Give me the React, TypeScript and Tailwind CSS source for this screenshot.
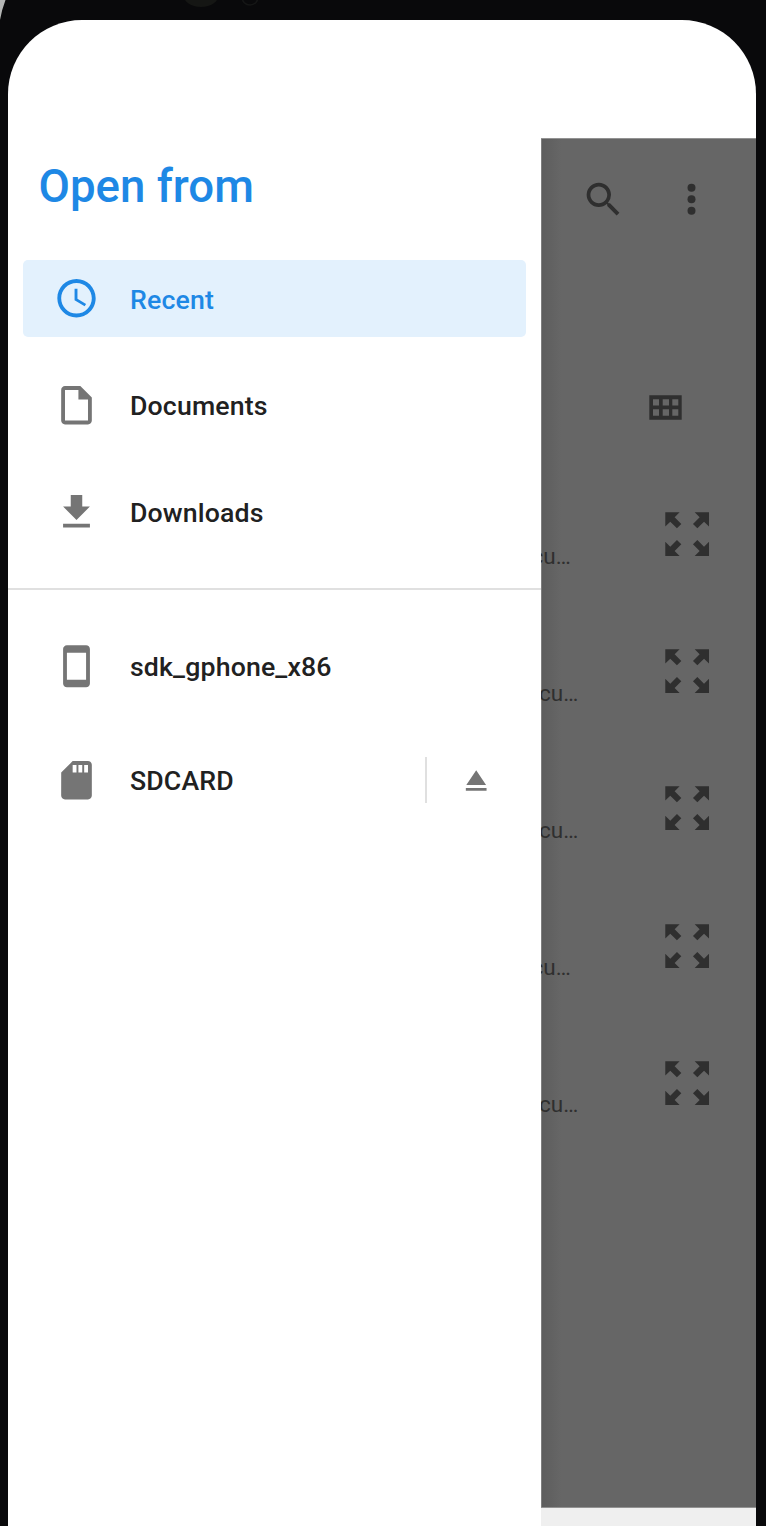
import type { ReactNode } from "react";

const PATHS = {
  recent:
    "M11.99 2C6.47 2 2 6.48 2 12s4.47 10 9.99 10C17.52 22 22 17.52 22 12S17.52 2 11.99 2zM12 20c-4.42 0-8-3.58-8-8s3.58-8 8-8 8 3.58 8 8-3.58 8-8 8zm.5-13H11v6l5.25 3.15.75-1.23-4.5-2.67z",
  document:
    "M14 2H6c-1.1 0-1.99.9-1.99 2L4 20c0 1.1.89 2 1.99 2H18c1.1 0 2-.9 2-2V8l-6-6zM6 20V4h7v5h5v11H6z",
  download: "M19 9h-4V3H9v6H5l7 7 7-7zM5 18v2h14v-2H5z",
  phone:
    "M17 1.01L7 1c-1.1 0-1.99.9-1.99 2v18c0 1.1.89 2 1.99 2h10c1.1 0 2-.9 2-2V3c0-1.1-.9-1.99-2-1.99zM17 19H7V5h10v14z",
  sdcard:
    "M18 2h-8L4.02 8 4 20c0 1.1.9 2 2 2h12c1.1 0 2-.9 2-2V4c0-1.1-.9-2-2-2zm-6 6h-2V4h2v4zm3 0h-2V4h2v4zm3 0h-2V4h2v4z",
  eject: "M5 17h14v2H5zm7-12L5.33 15h13.34z",
  search:
    "M15.5 14h-.79l-.28-.27A6.471 6.471 0 0 0 16 9.5 6.5 6.5 0 1 0 9.5 16c1.61 0 3.09-.59 4.23-1.57l.27.28v.79l5 4.99L20.49 19l-4.99-5zm-6 0C7.01 14 5 11.99 5 9.5S7.01 5 9.5 5 14 7.01 14 9.5 11.99 14 9.5 14z",
  expand:
    "M3 3H8.9L6.85 5.05 9.6 7.8 7.8 9.6 5.05 6.85 3 8.9zM21 3V8.9L18.95 6.85 16.2 9.6 14.4 7.8 17.15 5.05 15.1 3zM3 21V15.1L5.05 17.15 7.8 14.4 9.6 16.2 6.85 18.95 8.9 21zM21 21H15.1L17.15 18.95 14.4 16.2 16.2 14.4 18.95 17.15 21 15.1z",
};

function Icon({
  name,
  className,
  viewBox = "0 0 24 24",
}: {
  name: keyof typeof PATHS;
  className: string;
  viewBox?: string;
}) {
  return (
    <svg viewBox={viewBox} fill="currentColor" className={`shrink-0 ${className}`}>
      <path d={PATHS[name]} />
    </svg>
  );
}

function DrawerItem({
  icon,
  label,
  active = false,
  children,
}: {
  icon: keyof typeof PATHS;
  label: string;
  active?: boolean;
  children?: ReactNode;
}) {
  return (
    <div
      className={`mx-[15px] flex h-[76.4px] items-center rounded-[5px] pl-[30.2px] ${
        active ? "bg-[#e3f1fd] text-[#1e88e5]" : "text-[#757575]"
      }`}
    >
      <Icon name={icon} viewBox="-0.26 -0.15 24 24" className="size-[46px]" />
      <span
        className={`ml-[30.8px] pt-[2.4px] text-[26.7px] leading-8 font-medium tracking-[0.15px] ${
          active ? "text-[#1e88e5]" : "text-[#212121]"
        }`}
      >
        {label}
      </span>
      {children}
    </div>
  );
}

const files = ["u…", "cu…", "cu…", "u…", "cu…"];

function FileRow({ tail }: { tail: string }) {
  return (
    <div className="flex h-[137.1px] items-start justify-between pr-[40px]">
      <div
        className={`mt-[50px] flex h-[30px] justify-end overflow-hidden text-[22.5px] leading-[30px] whitespace-nowrap ${
          tail === "u…" ? "w-[29.7px]" : "w-[37.3px]"
        }`}
      >
        <span>cu…</span>
      </div>
      <Icon name="expand" className="mt-[14.3px] size-[58.3px]" />
    </div>
  );
}

export default function App() {
  return (
    <div
      className="relative flex h-[1526px] w-[766px] flex-col overflow-hidden bg-[#09090b] pt-5 pr-[10px] pl-2"
      style={{ fontFamily: 'Roboto, "Liberation Sans", sans-serif' }}
    >
      <svg className="absolute top-0 left-0 h-6 w-[300px]" viewBox="0 0 300 24">
        <path d="M0 0H5.5Q2 9 0 20Z" fill="#b4b6b5" />
        <ellipse cx="201" cy="-6" rx="18" ry="13" fill="#151614" />
        <circle cx="250" cy="-3" r="8" fill="none" stroke="#151616" strokeWidth="1.5" />
      </svg>
      <div className="flex min-h-0 flex-1 flex-col overflow-hidden rounded-t-[74px] bg-white">
        <div className="h-[118px] shrink-0" />
        <div className="flex min-h-0 flex-1">
          <nav className="flex w-[533px] shrink-0 flex-col bg-white">
            <h1 className="mt-[19px] ml-[30.5px] h-[60px] text-[45.6px] leading-[60px] font-medium text-[#1e88e5]">
              Open from
            </h1>
            <div className="mt-[43.3px] flex flex-col gap-[30.2px]">
              <DrawerItem icon="recent" label="Recent" active />
              <DrawerItem icon="document" label="Documents" />
              <DrawerItem icon="download" label="Downloads" />
            </div>
            <div className="mt-[38.1px] h-[2px] w-full bg-[#e0e0e0]" />
            <div className="mt-[37.8px] flex flex-col gap-[37.8px]">
              <DrawerItem icon="phone" label="sdk_gphone_x86" />
              <DrawerItem icon="sdcard" label="SDCARD">
                <div className="mr-[32.2px] ml-auto flex h-[46px] items-center border-l-2 border-[#e0e0e0] pl-[31.5px]">
                  <Icon name="eject" viewBox="-0.3 -0.5 24 24" className="size-[35.5px]" />
                </div>
              </DrawerItem>
            </div>
          </nav>
          <main className="flex flex-1 flex-col">
            <div className="flex h-[1370px] shrink-0 flex-col border-y border-[#929292] bg-[linear-gradient(to_right,#7e7e7e_1px,#5d5d5d_1px,#666666_20px)] text-[#2f2f2f]">
              <div className="mt-[37px] flex h-[46px] items-center pl-[40px]">
                <Icon name="search" className="size-[45px]" />
                <svg viewBox="0 0 10 32" className="ml-[60.4px] h-8 w-[10px]" fill="currentColor">
                  <circle cx="5.5" cy="4.7" r="4" />
                  <circle cx="5.5" cy="16.2" r="4" />
                  <circle cx="5.5" cy="27.7" r="4" />
                </svg>
              </div>
              <svg
                viewBox="0 0 33 25"
                className="mt-[173px] ml-[108px] h-[25px] w-[33px] shrink-0"
                fill="currentColor"
                fillRule="evenodd"
              >
                <path d="M.3.2h32.4v24.6H.3zM4 4.2v6.3h6V4.2zM13.7 4.2v6.3H20V4.2zM23.3 4.2v6.3h6V4.2zM4 14.2v6.6h6v-6.6zM13.7 14.2v6.6H20v-6.6zM23.3 14.2v6.6h6v-6.6z" />
              </svg>
              <div className="mt-[71px] flex flex-col">
                {files.map((tail, i) => (
                  <FileRow key={i} tail={tail} />
                ))}
              </div>
            </div>
            <div className="flex-1 bg-[#efefef]" />
          </main>
        </div>
      </div>
    </div>
  );
}
